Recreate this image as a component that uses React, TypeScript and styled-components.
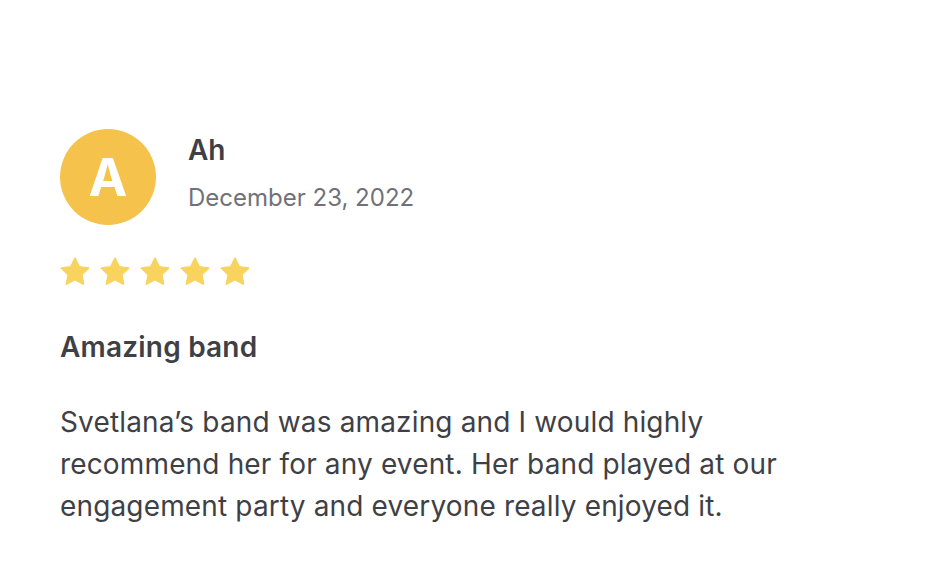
import React from "react";
import styled, { createGlobalStyle } from "styled-components";

const Global = createGlobalStyle`
  html, body { margin: 0; padding: 0; background: #fff; }
  body { font-family: Inter, "Noto Sans", sans-serif; -webkit-font-smoothing: antialiased; }
`;

const Card = styled.div`
  width: 928px;
  height: 566px;
  box-sizing: border-box;
  padding: 129px 60px 0 60px;
  display: flex;
  flex-direction: column;
`;

const Header = styled.div`
  display: flex;
  align-items: flex-start;
  gap: 32px;
`;

const Avatar = styled.div`
  width: 96px;
  height: 96px;
  border-radius: 50%;
  background: #f5c34b;
  color: #fff;
  display: flex;
  align-items: center;
  justify-content: center;
  font-size: 52px;
  font-weight: 700;
  flex-shrink: 0;
`;

const Meta = styled.div`
  display: flex;
  flex-direction: column;
  padding-top: 4px;
`;

const Name = styled.div`
  font-size: 28px;
  font-weight: 600;
  color: #3f3f46;
  line-height: 34px;
`;

const DateText = styled.div`
  font-size: 24px;
  color: #71717a;
  line-height: 32px;
  margin-top: 15px;
`;

const Stars = styled.div`
  display: flex;
  gap: 8px;
  margin-top: 31px;
  margin-left: -1px;
`;

const Title = styled.div`
  font-size: 28px;
  font-weight: 600;
  color: #3f3f46;
  margin-top: 42px;
  line-height: 34px;
  letter-spacing: 0.2px;
`;

const Body = styled.p`
  margin: 37px 0 0 0;
  font-size: 28px;
  line-height: 42px;
  color: #3f3f46;
  max-width: 760px;
  letter-spacing: 0.15px;
`;

const Star = () => (
  <svg width="32" height="32" viewBox="0 0 24 24">
    <path
      d="M12 1.8l3.1 6.4 7 .9-5.1 4.9 1.3 7L12 17.6 5.7 21l1.3-7L1.9 9.1l7-.9z"
      fill="#f8d35e"
      stroke="#f8d35e"
      strokeWidth="1.4"
      strokeLinejoin="round"
    />
  </svg>
);

export default function App() {
  return (
    <>
      <Global />
      <Card>
        <Header>
          <Avatar>A</Avatar>
          <Meta>
            <Name>Ah</Name>
            <DateText>December 23, 2022</DateText>
          </Meta>
        </Header>
        <Stars>
          {[0, 1, 2, 3, 4].map((i) => (
            <Star key={i} />
          ))}
        </Stars>
        <Title>Amazing band</Title>
        <Body>
          Svetlana’s band was amazing and I would highly recommend her for any event. Her band played at our engagement
          party and everyone really enjoyed it.
        </Body>
      </Card>
    </>
  );
}
